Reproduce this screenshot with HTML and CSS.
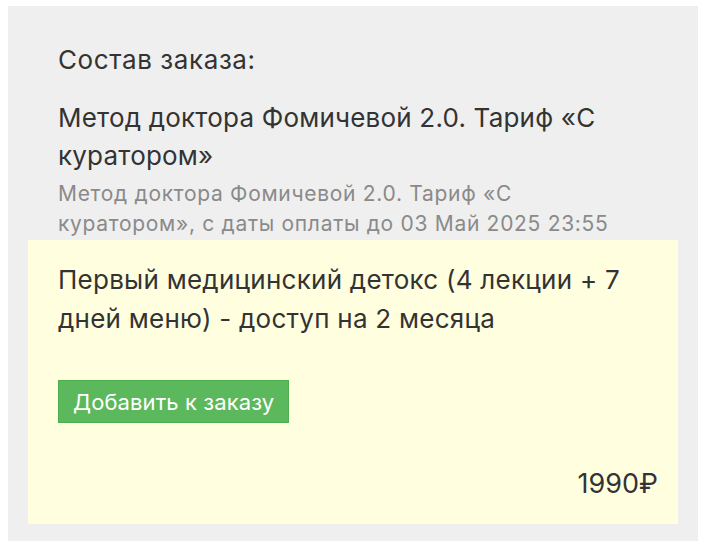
FILE: index.html
```html
<!DOCTYPE html>
<html lang="ru">
<head>
<meta charset="utf-8">
<link rel="stylesheet" href="styles.css">
</head>
<body>
<div class="panel">
  <div class="order">
    <div class="order-label">Состав заказа:</div>
    <div class="item-title">Метод доктора Фомичевой 2.0. Тариф «С куратором»</div>
    <div class="item-desc">Метод доктора Фомичевой 2.0. Тариф «С куратором», с даты оплаты до 03 Май 2025 23:55</div>
  </div>
  <div class="offer">
    <div class="offer-title">Первый медицинский детокс (4 лекции + 7 дней меню) - доступ на 2 месяца</div>
    <div class="offer-actions"><button class="btn-add">Добавить к заказу</button></div>
    <div class="offer-price">1990₽</div>
  </div>
</div>
</body>
</html>
```

FILE: styles.css
```css
html, body {
  margin: 0;
  padding: 0;
  background: #ffffff;
}
body {
  padding: 6px 9px 0 8px;
  font-family: Inter, "Noto Sans", sans-serif;
  color: #333333;
}
.panel {
  background: #efefef;
  padding: 20px 20px 20px 20px;
}
.order {
  padding: 14px 30px 1px 30px;
}
.order-label {
  font-size: 26px;
  line-height: 40px;
  letter-spacing: 0.6px;
  margin-bottom: 19px;
}
.item-title {
  font-size: 26px;
  line-height: 38px;
  letter-spacing: 0.2px;
}
.item-desc {
  font-size: 21px;
  line-height: 30px;
  color: #8a8a8a;
  letter-spacing: 0.7px;
  margin-top: 4px;
}
.offer {
  background: #ffffe0;
  padding: 20px 20px 20px 30px;
}
.offer-title {
  font-size: 26px;
  line-height: 39px;
  letter-spacing: 0.25px;
  padding-right: 10px;
}
.offer-actions {
  margin-top: 42px;
}
.btn-add {
  font-family: inherit;
  font-size: 22px;
  letter-spacing: 0.1px;
  color: #ffffff;
  background: #5cb85c;
  border: 1px solid #4cae4c;
  height: 43px;
  padding: 0 14px;
  border-radius: 0;
}
.offer-price {
  margin-top: 41px;
  font-size: 27px;
  line-height: 40px;
  text-align: right;
}
```
